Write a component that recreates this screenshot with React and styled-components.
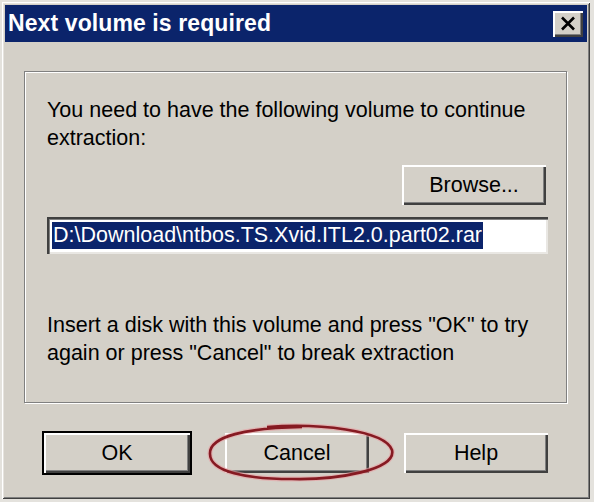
import React from 'react'
import styled, { createGlobalStyle } from 'styled-components'

const GlobalStyle = createGlobalStyle`
  html, body {
    margin: 0;
    padding: 0;
    background: #e4e2dd;
  }
  body {
    font-family: "Liberation Sans", Arial, sans-serif;
  }
`

const Window = styled.div`
  box-sizing: border-box;
  margin: 2px 0 0 2px;
  width: 588px;
  height: 497px;
  padding: 3px;
  background: #d4d0c8;
  box-shadow: inset 1px 1px #ffffff, inset -1px -1px #404040,
    inset 2px 2px #e6e3de, inset -2px -2px #808080;
`

const TitleBar = styled.div`
  height: 37px;
  display: flex;
  align-items: center;
  justify-content: space-between;
  padding: 0 4px 0 3px;
  background: #0b246b;
`

const Title = styled.span`
  color: #ffffff;
  font-weight: bold;
  font-size: 23px;
  letter-spacing: 0.1px;
`

const CloseButton = styled.div`
  box-sizing: border-box;
  width: 30px;
  height: 26px;
  display: flex;
  align-items: center;
  justify-content: center;
  background: #d4d0c8;
  box-shadow: inset 2px 2px #ffffff, inset -2px -2px #404040,
    inset -3px -3px #808080;
`

const Content = styled.div`
  padding: 29px 0 0 19px;
`

const GroupBox = styled.div`
  box-sizing: border-box;
  width: 543px;
  height: 332px;
  padding: 24px 18px 0 22px;
  border: 1px solid #808080;
  box-shadow: inset 1px 1px #ffffff, 1px 1px #ffffff;
`

const Message = styled.p`
  margin: ${p => p.$top || 0}px 0 0;
  font-size: 21.5px;
  line-height: 28px;
  color: #000000;
`

const BrowseRow = styled.div`
  display: flex;
  justify-content: flex-end;
  margin-top: 11px;
`

const Button = styled.div`
  box-sizing: border-box;
  width: ${p => p.$width || 148}px;
  height: 44px;
  display: flex;
  align-items: center;
  justify-content: center;
  font-size: 21.5px;
  color: #000000;
  background: #d4d0c8;
  border: 2px solid ${p => (p.$default ? '#000000' : 'transparent')};
  box-shadow: inset 2px 2px #ffffff, inset -2px -2px #404040,
    inset -3px -3px #808080;
`

const PathField = styled.div`
  box-sizing: border-box;
  margin-top: 10px;
  height: 37px;
  display: flex;
  align-items: center;
  padding-left: 5px;
  background: #ffffff;
  box-shadow: inset 2px 2px #404040, inset 3px 3px #808080,
    inset -2px -2px #e9e7e3;
`

const Selected = styled.span`
  background: #0b246b;
  color: #ffffff;
  font-size: 21.5px;
  line-height: 27px;
  padding: 0 1px;
  white-space: nowrap;
`

const ButtonRow = styled.div`
  display: flex;
  gap: 31px;
  margin: 28px 0 0 18px;
`

const Marked = styled.div`
  position: relative;
`

const Ring = styled.svg`
  position: absolute;
  left: -16px;
  top: -9px;
  overflow: visible;
  pointer-events: none;
`

function App() {
  return (
    <>
      <GlobalStyle />
      <Window>
        <TitleBar>
          <Title>Next volume is required</Title>
          <CloseButton>
            <svg width="16" height="15" viewBox="0 0 16 15">
              <path d="M2 1.5 L14 13.5 M14 1.5 L2 13.5" stroke="#000" strokeWidth="2.6" />
            </svg>
          </CloseButton>
        </TitleBar>
        <Content>
          <GroupBox>
            <Message>
              You need to have the following volume to continue
              <br />
              extraction:
            </Message>
            <BrowseRow>
              <Button $width={148}>Browse...</Button>
            </BrowseRow>
            <PathField>
              <Selected>D:\Download\ntbos.TS.Xvid.ITL2.0.part02.rar</Selected>
            </PathField>
            <Message $top={57}>
              Insert a disk with this volume and press "OK" to try
              <br />
              again or press "Cancel" to break extraction
            </Message>
          </GroupBox>
          <ButtonRow>
            <Button $width={150} $default>OK</Button>
            <Marked>
              <Button $width={148}>Cancel</Button>
              <Ring width="188" height="60" viewBox="0 0 188 60">
                <path
                  d="M60 5 C 110 1, 178 8, 185 28 C 190 48, 130 58, 85 57 C 40 57, 3 50, 3 32 C 2 14, 40 6, 95 5"
                  fill="none"
                  stroke="#e8a0a4"
                  strokeWidth="5"
                  opacity="0.6"
                />
                <path
                  d="M60 5 C 110 1, 178 8, 185 28 C 190 48, 130 58, 85 57 C 40 57, 3 50, 3 32 C 2 14, 40 6, 95 5"
                  fill="none"
                  stroke="#861a22"
                  strokeWidth="2.6"
                />
              </Ring>
            </Marked>
            <Button $width={148}>Help</Button>
          </ButtonRow>
        </Content>
      </Window>
    </>
  )
}

export default App
